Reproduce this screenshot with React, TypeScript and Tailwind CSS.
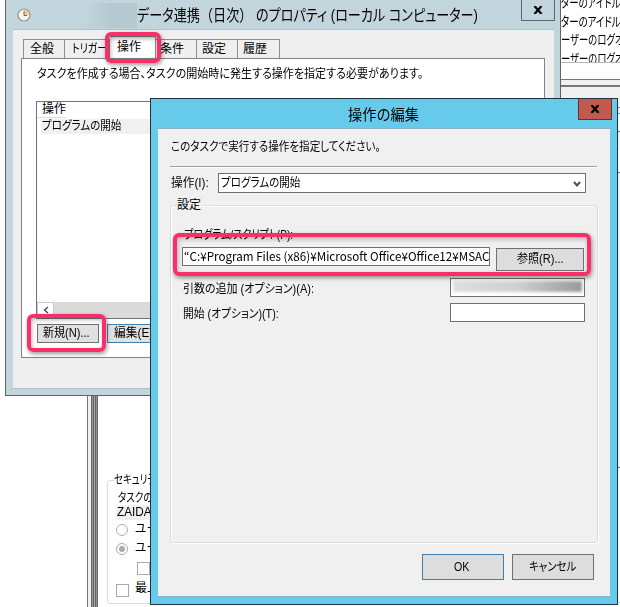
import React, { useLayoutEffect, useRef, useState } from 'react';

type FitProps = { w: number; className?: string; children: React.ReactNode };

// Squeezes a line of text horizontally so that it takes exactly w pixels.
const Fit: React.FC<FitProps> = ({ w, className = '', children }) => {
  const ref = useRef<HTMLSpanElement>(null);
  const [scale, setScale] = useState(1);
  useLayoutEffect(() => {
    if (ref.current) setScale(w / ref.current.offsetWidth);
  }, [w]);
  return (
    <span className={`block shrink-0 whitespace-nowrap ${className}`} style={{ width: w }}>
      <span ref={ref} className="inline-block origin-left" style={{ transform: `scaleX(${scale})` }}>
        {children}
      </span>
    </span>
  );
};

const CloseGlyph: React.FC = () => (
  <svg width="10" height="8" viewBox="0 0 10 8" fill="none" stroke="#000" strokeWidth="2.2">
    <path d="M1.5 0L8.5 8M8.5 0L1.5 8" />
  </svg>
);

const tabs = [
  { label: '全般', w: 24, box: 'w-[42px] h-[19px] pl-[6px] border-l' },
  { label: 'トリガー', w: 35, box: 'w-[45px] h-[19px] pl-[7px]' },
  { label: '操作', w: 24, box: 'w-[46px] h-[22px] pl-[7px] pt-[1px] bg-white' },
  { label: '条件', w: 24, box: 'w-[41px] h-[19px] pl-[4px]' },
  { label: '設定', w: 24, box: 'w-[41px] h-[19px] pl-[5px]' },
  { label: '履歴', w: 24, box: 'w-[42px] h-[19px] pl-[5px]' },
];

const Console: React.FC = () => (
  <>
    <div className="absolute left-[561px] top-0 w-[59px] h-[607px] bg-white overflow-hidden">
      <div className="h-[63px] overflow-hidden text-[13px] leading-[18.5px] border-b border-[#b8b8b8] [font-feature-settings:'palt']">
        <div className="-mt-[6px]">
          <Fit w={69}>ターのアイドル時</Fit>
          <Fit w={69}>ターのアイドル時</Fit>
          <Fit w={80}>ーザーのログオン時</Fit>
          <Fit w={80}>ーザーのログオン時</Fit>
        </div>
      </div>
      <div className="h-[16px]" />
      <div className="h-[8px] border-t border-b-2 border-[#777] bg-[#f0f0f0]" />
      <div className="h-[20px] bg-[#f0f0f0]" />
      <div className="h-[7px] border-y border-[#8a8a8a] bg-[#f0f0f0]" />
      <div className="h-[18px] border-b border-[#666] bg-white" />
      <div className="h-[18px] bg-[#f0f0f0]" />
      <div className="h-[23px] border-b border-[#666] bg-white" />
      <div className="h-[295px] bg-[#f0f0f0] border-b border-[#666]" />
      <div className="h-[135px] bg-[#fafafa] border-b border-[#d5dfe5]" />
    </div>
    <div className="absolute left-0 top-[396px] w-[150px] h-[211px] bg-white overflow-hidden flex">
      <div className="w-[87px] shrink-0" />
      <div className="w-[4px] shrink-0 border-l border-[#777] bg-[#f0f0f0]" />
      <div className="w-[3px] shrink-0 bg-[#949494] border-x border-[#666]" />
      <div className="w-[2px] shrink-0 bg-[#a5a5a5] border-r border-[#666]" />
      <div className="w-[2px] shrink-0 bg-[#949494] border-r border-[#666]" />
      <div className="w-[9px] shrink-0" />
      <div className="mt-[84px] h-[124px] w-[80px] shrink-0 border border-[#d5dfe5] rounded-[3px] text-[12px] leading-[15px] [font-feature-settings:'palt']">
        <div className="-mt-[8px] ml-[6px] w-[60px] bg-white"><Fit w={69}>セキュリティ オプ</Fit></div>
        <div className="mt-[3px] ml-[10px]"><Fit w={54}>タスクの実行</Fit></div>
        <div className="ml-[8px] pl-[1px] bg-[#f0f0f0] h-[15px]"><Fit w={43} className="-mt-[1px]">ZAIDAN</Fit></div>
        <div className="flex mt-[2px] ml-[8px] gap-[7px] items-center">
          <span className="size-[12px] rounded-full border border-[#b0b0b0] shrink-0" />
          <Fit w={46}>ユーザー</Fit>
        </div>
        <div className="flex mt-[4px] ml-[8px] gap-[7px] items-center">
          <span className="size-[12px] rounded-full border border-[#a8a8a8] shrink-0 flex items-center justify-center">
            <span className="size-[6px] rounded-full bg-[#aaa]" />
          </span>
          <Fit w={46}>ユーザー</Fit>
        </div>
        <div className="mt-[6px] ml-[29px] size-[13px] border border-[#aaa]" />
        <div className="flex mt-[5px] ml-[8px] gap-[6px] items-start">
          <span className="size-[13px] mt-[4px] border border-[#aaa] shrink-0" />
          <Fit w={36} className="mt-[1px]">最上位</Fit>
        </div>
      </div>
    </div>
  </>
);

const PropertiesWindow: React.FC = () => (
  <div className="absolute left-[5px] top-[-1px] w-[556px] h-[397px] bg-[#c2d5dc] border border-[#5b6270]">
    <div className="h-[29px] flex relative">
      <svg className="ml-[11px] mt-[8px] shrink-0" width="14" height="14" viewBox="0 0 14 14">
        <circle cx="7" cy="7" r="6" fill="#f6f5ef" stroke="#929694" strokeWidth="1.2" />
        <path d="M7 7V2A5 5 0 0 1 12 7Z" fill="#f6c98b" />
        <path d="M7 3V7.5H10" fill="none" stroke="#666" strokeWidth="1" />
      </svg>
      <div className="ml-[54px] mt-[3px] w-[52px] h-[25px] shrink-0 bg-linear-to-r from-[#c2d5dc] via-[#b6c9d0] to-[#b6c9d1]" />
      <Fit w={341} className="mt-[3px] text-[16px] leading-[26px]">
        <span className="[font-feature-settings:'palt']">データ連携</span>（日次） <span className="[font-feature-settings:'palt']">のプロパティ (ローカル コンピューター)</span>
      </Fit>
      <div className="absolute right-[5px] top-0 w-[34px] h-[21px] border border-t-0 border-[#5b6670] flex items-center justify-center"><CloseGlyph /></div>
    </div>
    <div className="ml-[7px] w-[541px] h-[360px] bg-[#efefef] border-t border-b border-[#b1c0c7] pl-[8px] [font-feature-settings:'palt']">
      <div className="flex items-end h-[28px] pl-[2px] text-[12px] leading-[18px]">
        {tabs.map((tab) => (
          <div key={tab.label} className={`${tab.box} shrink-0 border-t border-r border-[#8c8e96]`}>
            <Fit w={tab.w}>{tab.label}</Fit>
          </div>
        ))}
      </div>
      <div className="w-[524px] h-[300px] bg-white border border-[#82828c] pl-[14px] pt-[7px] text-[12px]">
        <Fit w={386} className="ml-[1px] leading-[17px]">タスクを作成する場合、タスクの開始時に発生する操作を指定する必要があります。</Fit>
        <div className="mt-[18px] w-[490px] h-[218px] border border-[#707078]">
          <Fit w={24} className="pl-[5px] h-[15px] leading-[15px] box-content border-b border-[#ddd]">操作</Fit>
          <div className="ml-[4px] pl-[1px] h-[15px] leading-[15px] mt-[1px] bg-[#f0f0f0]"><Fit w={79}>プログラムの開始</Fit></div>
          <div className="h-[168px]" />
          <div className="h-[16px] flex bg-[#dadada]">
            <div className="w-[17px] bg-white border border-[#c8c8c8] flex items-center justify-center">
              <svg width="6" height="8" viewBox="0 0 6 8"><path d="M5 1L1.5 4L5 7" fill="none" stroke="#444" strokeWidth="1.3" /></svg>
            </div>
          </div>
        </div>
        <div className="flex ml-[1px] mt-[5px] gap-[8px] leading-[17px]">
          <div className="w-[62px] h-[19px] border border-[#707070] bg-[#e1e1e1] pl-[5px]"><Fit w={47}>新規(N)...</Fit></div>
          <div className="w-[62px] h-[19px] border border-[#3c7fb1] bg-[#e1e1e1] pl-[6px]"><Fit w={49}>編集(E)...</Fit></div>
        </div>
      </div>
    </div>
  </div>
);

const EditDialog: React.FC = () => (
  <div className="absolute left-[150px] top-[98px] w-[468px] h-[507px] bg-[#66caea] border border-[#23323c] text-[12px]">
    <div className="h-[29px] relative pl-[197px] pt-[4px]">
      <Fit w={71} className="text-[15px] leading-[23px]">操作の編集</Fit>
      <div className="absolute right-[5px] top-0 w-[34px] h-[21px] border border-t-0 border-[#712c2b] bg-[#c2594f] flex items-center justify-center"><CloseGlyph /></div>
    </div>
    <div className="ml-[7px] w-[452px] h-[469px] bg-[#f0f0f0] border-t border-b border-[#8fb2bf] pl-[12px] pt-[10px] [font-feature-settings:'palt']">
      <Fit w={210} className="ml-[1px] leading-[17px]">このタスクで実行する操作を指定してください。</Fit>
      <div className="mt-[10px] w-[427px] h-[2px] border-t border-[#a0a0a0] bg-white" />
      <div className="flex mt-[5px] pl-[1px] leading-[18px]">
        <Fit w={38} className="mt-[1px]">操作(I):</Fit>
        <div className="ml-[9px] w-[368px] h-[20px] border border-[#707070] bg-white flex justify-between pl-[2px] pr-[4px]">
          <Fit w={79}>プログラムの開始</Fit>
          <svg className="mt-[7px]" width="8" height="7" viewBox="0 0 8 7"><path d="M1 1L4 4.5L7 1" fill="none" stroke="#505050" strokeWidth="2" /></svg>
        </div>
      </div>
      <div className="mt-[12px] w-[428px] h-[338px] border border-[#d5dfe5] rounded-[3px] shadow-[inset_1px_1px_0_#fff,1px_1px_0_#fff] leading-[17px]">
        <div className="-mt-[9px] ml-[5px] w-[26px] bg-[#f0f0f0] pl-[1px]"><Fit w={24}>設定</Fit></div>
        <Fit w={109} className="mt-[13px] ml-[13px]">プログラム/スクリプト(P):</Fit>
        <div className="flex ml-[11px] mt-[3px]">
          <div className="w-[308px] h-[19px] border border-[#707070] bg-white overflow-hidden pl-[1px] leading-[16px]">
            <Fit w={326} className="font-['Noto_Sans_CJK_JP',sans-serif]">“C:¥Program Files (x86)¥Microsoft Office¥Office12¥MSACCES</Fit>
          </div>
          <div className="ml-[6px] mt-[1px] w-[88px] h-[23px] border border-[#707070] bg-[#dddddd] flex justify-center leading-[21px]"><Fit w={47}>参照(R)...</Fit></div>
        </div>
        <div className="flex justify-between ml-[12px] mr-[12px] mt-[7px]">
          <Fit w={131} className="mt-[3px] h-[16px]">引数の追加 (オプション)(A):</Fit>
          <div className="w-[135px] h-[19px] border border-[#707070] bg-white overflow-hidden p-[2px]">
            <div className="h-[11px] w-full blur-[1.5px] bg-linear-to-r from-[#dedede] via-[#d0d0d0] to-[#999]" />
          </div>
        </div>
        <div className="flex justify-between ml-[12px] mr-[12px] mt-[6px]">
          <Fit w={96} className="mt-[3px] h-[16px]">開始 (オプション)(T):</Fit>
          <div className="w-[135px] h-[19px] border border-[#707070] bg-white" />
        </div>
      </div>
      <div className="flex mt-[11px] pl-[252px] gap-[8px] leading-[24px]">
        <div className="w-[82px] h-[26px] border border-[#3c7fb1] bg-[#dddddd] flex justify-center pr-[3px]"><Fit w={15}>OK</Fit></div>
        <div className="w-[82px] h-[26px] border border-[#707070] bg-[#dddddd] flex justify-center pr-[2px]"><Fit w={47}>キャンセル</Fit></div>
      </div>
    </div>
  </div>
);

export default function App() {
  return (
    <div className="relative w-[620px] h-[607px] overflow-hidden bg-white text-black font-['Liberation_Sans','Noto_Sans_CJK_JP',sans-serif]">
      <Console />
      <PropertiesWindow />
      <EditDialog />
      <div className="absolute left-[105px] top-[32px] w-[56px] h-[31px] rounded-[6px] border-4 border-[#fa2f69] shadow-[1px_2px_4px_#0006,inset_1px_2px_5px_#0006]" />
      <div className="absolute left-[27px] top-[314px] w-[79px] h-[38px] rounded-[6px] border-4 border-[#fa2f69] shadow-[1px_2px_4px_#0006,inset_1px_2px_4px_#0004]" />
      <div className="absolute left-[173px] top-[233px] w-[418px] h-[43px] rounded-[6px] border-4 border-[#fa2f69] shadow-[1px_2px_4px_#0006,inset_1px_2px_5px_#0004]" />
    </div>
  );
}
